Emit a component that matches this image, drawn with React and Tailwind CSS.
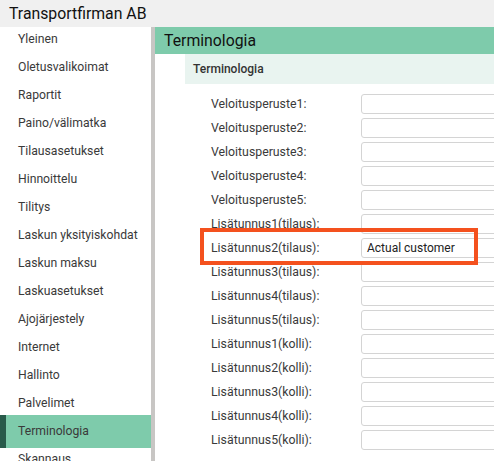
import React from "react";

const menu = [
  "Yleinen",
  "Oletusvalikoimat",
  "Raportit",
  "Paino/välimatka",
  "Tilausasetukset",
  "Hinnoittelu",
  "Tilitys",
  "Laskun yksityiskohdat",
  "Laskun maksu",
  "Laskuasetukset",
  "Ajojärjestely",
  "Internet",
  "Hallinto",
  "Palvelimet",
  "Terminologia",
  "Skannaus",
];

const rows = [
  ["Veloitusperuste1:", ""],
  ["Veloitusperuste2:", ""],
  ["Veloitusperuste3:", ""],
  ["Veloitusperuste4:", ""],
  ["Veloitusperuste5:", ""],
  ["Lisätunnus1(tilaus):", ""],
  ["Lisätunnus2(tilaus):", "Actual customer"],
  ["Lisätunnus3(tilaus):", ""],
  ["Lisätunnus4(tilaus):", ""],
  ["Lisätunnus5(tilaus):", ""],
  ["Lisätunnus1(kolli):", ""],
  ["Lisätunnus2(kolli):", ""],
  ["Lisätunnus3(kolli):", ""],
  ["Lisätunnus4(kolli):", ""],
  ["Lisätunnus5(kolli):", ""],
];

export default function App() {
  return (
    <div
      className="w-[494px] h-[461px] overflow-hidden bg-white flex flex-col"
      style={{ fontFamily: "Roboto, 'Noto Sans', sans-serif" }}
    >
      <div className="h-[27px] shrink-0 bg-[#f0f0f0] flex items-center pl-[9px] text-[15.8px] text-[#111]">
        Transportfirman AB
      </div>
      <div className="flex flex-1 min-h-0">
        <div className="w-[151px] shrink-0 flex flex-col -mt-[2px]">
          {menu.map((m) =>
            m === "Terminologia" ? (
              <div
                key={m}
                className="relative h-[33px] -mt-[2px] -mb-[3px] shrink-0 bg-[#7ecbab] flex items-center pl-[18px] text-[12.2px] text-[#3a3a3a]"
              >
                <div className="absolute left-0 top-0 bottom-0 w-[6px] bg-[#285a4a]" />
                {m}
              </div>
            ) : (
              <div
                key={m}
                className="h-[28px] shrink-0 flex items-center pl-[18px] text-[12.2px] text-[#3a3a3a] whitespace-nowrap"
              >
                {m}
              </div>
            )
          )}
        </div>
        <div className="w-[4px] shrink-0 bg-[#c8c6c4]" />
        <div className="flex-1 min-w-0 flex flex-col">
          <div className="h-[27px] shrink-0 bg-[#7ecbab] flex items-center pl-[9px] text-[15.8px] text-[#111]">
            Terminologia
          </div>
          <div className="ml-[30px] h-[30px] shrink-0 bg-[#e9f4f0] flex items-center pl-[8px] text-[12px] font-medium text-[#333]">
            Terminologia
          </div>
          <div className="relative pt-[10px] pl-[56px] flex flex-col gap-[4px]">
            {rows.map(([label, value]) => (
              <div key={label} className="flex items-center h-[20px]">
                <div className="w-[150px] shrink-0 text-[12.3px] text-[#3a3a3a]">{label}</div>
                <div className="w-[200px] shrink-0 h-[20px] border border-[#d4d4d4] rounded-[3px] bg-white flex items-center pl-[5px] text-[12px] text-[#222]">
                  {value}
                </div>
              </div>
            ))}
            <div className="absolute left-[45px] top-[144px] w-[278px] h-[37px] border-[4px] border-[#f4511e]" />
          </div>
        </div>
      </div>
    </div>
  );
}
